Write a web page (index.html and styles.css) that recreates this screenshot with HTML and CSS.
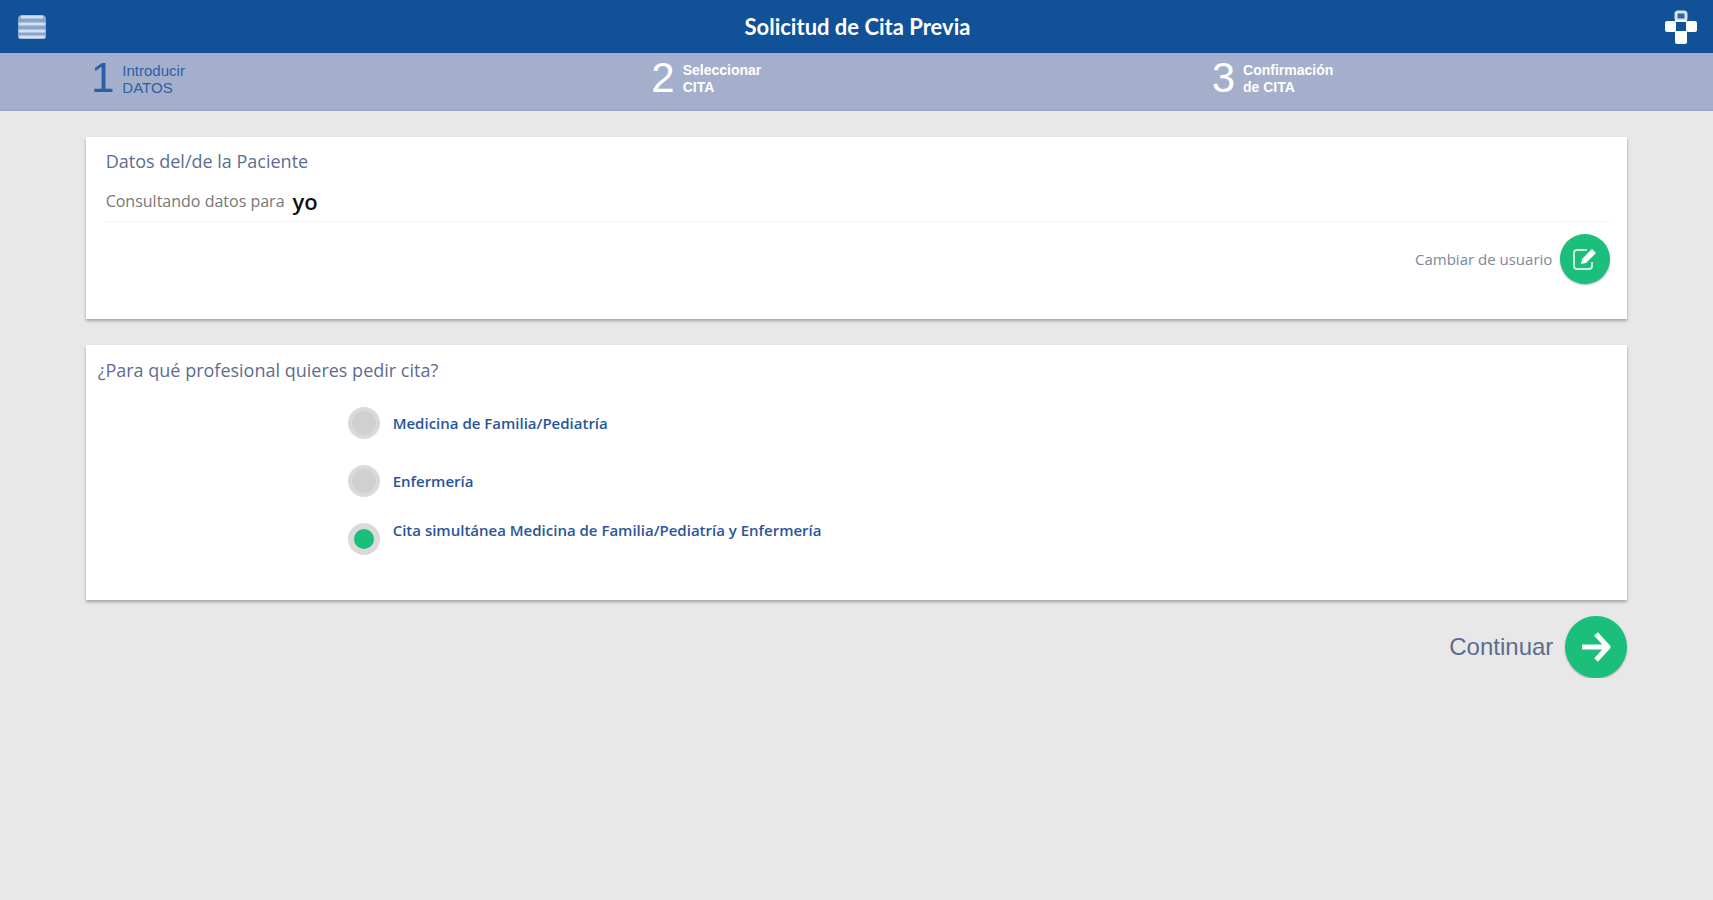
FILE: index.html
```html
<!DOCTYPE html>
<html lang="es">

<head>
    <meta charset="UTF-8" />
    <meta name="viewport" content="width=device-width, initial-scale=1" />
    <title>Solicitud de Cita Previa</title>
    <link rel="stylesheet" href="styles.css">
</head>

<body>
    <header class="cabecera">
        <button type="button" class="btn-menu" aria-label="Menú">
            <svg width="28" height="24" viewBox="0 0 28 24" aria-hidden="true">
                <rect width="28" height="24" rx="4" fill="#86a4ce" />
                <path d="M4 2h20M2 9h24M2 16h24M2 22h24" stroke="#d3dfef" stroke-width="3" stroke-linecap="round" />
            </svg>
        </button>
        <h1>Solicitud de Cita Previa</h1>
        <a href="#" class="logo" aria-label="Inicio">
            <svg width="32" height="34" viewBox="0 0 32 34" aria-hidden="true">
                <rect x="0" y="11" width="11" height="11" rx="2" fill="#fff" />
                <rect x="21" y="11" width="11" height="11" rx="2" fill="#fff" />
                <rect x="10" y="21" width="12" height="13" rx="2" fill="#fff" />
                <rect x="11" y="2" width="10" height="8" rx="2" fill="#2f66a8" stroke="#d5e2f2" stroke-width="3" />
                <path d="M10 11h12M10 22h12" stroke="#fff" stroke-width="2" />
            </svg>
        </a>
    </header>

    <ol class="pasos">
        <li class="paso activo">
            <span class="numero">1</span>
            <span class="texto">Introducir<br>DATOS</span>
        </li>
        <li class="paso">
            <span class="numero">2</span>
            <span class="texto">Seleccionar<br>CITA</span>
        </li>
        <li class="paso">
            <span class="numero">3</span>
            <span class="texto">Confirmación<br>de CITA</span>
        </li>
    </ol>

    <main>
        <section class="tarjeta paciente">
            <h2>Datos del/de la Paciente</h2>
            <p class="consulta">Consultando datos para <strong>yo</strong></p>
            <div class="cambiar">
                <label for="cambiar">Cambiar de usuario</label>
                <button type="button" id="cambiar" class="btn-redondo">
                    <svg width="26" height="24" viewBox="0 0 26 24" fill="none" aria-hidden="true">
                        <path d="M15 3H5a3 3 0 0 0-3 3v13a3 3 0 0 0 3 3h12a3 3 0 0 0 3-3v-4" stroke="#c9f1de" stroke-width="2" />
                        <path d="M9 17l1-5L20 2l4 4-10 10z" fill="#fff" />
                    </svg>
                </button>
            </div>
        </section>

        <form class="tarjeta" id="cita">
            <fieldset>
                <legend>¿Para qué profesional quieres pedir cita?</legend>
                <div class="opcion">
                    <input type="radio" name="profesional" id="medicina">
                    <label for="medicina">Medicina de Familia/Pediatría</label>
                </div>
                <div class="opcion">
                    <input type="radio" name="profesional" id="enfermeria">
                    <label for="enfermeria">Enfermería</label>
                </div>
                <div class="opcion alta">
                    <input type="radio" name="profesional" id="simultanea" checked>
                    <label for="simultanea">Cita simultánea Medicina de Familia/Pediatría y Enfermería</label>
                </div>
            </fieldset>
        </form>

        <div class="continuar">
            <label for="continuar">Continuar</label>
            <button type="submit" form="cita" id="continuar" class="btn-redondo grande">
                <svg width="32" height="32" viewBox="0 0 32 32" fill="none" aria-hidden="true">
                    <path d="M2 16h26M16 3l12 13-12 13" stroke="#fff" stroke-width="5" stroke-linejoin="round" />
                </svg>
            </button>
        </div>
    </main>
</body>

</html>
```

FILE: styles.css
```css
* {
    box-sizing: border-box;
}

body {
    margin: 0;
    font-family: "Open Sans", "Noto Sans", sans-serif;
    background: #e8e8e8;
    color: #5d6d8e;
}

button {
    padding: 0;
    border: 0;
    background: none;
    cursor: pointer;
}

svg {
    display: block;
}

/* cabecera */
.cabecera {
    display: grid;
    grid-template-columns: 1fr auto 1fr;
    align-items: center;
    height: 53px;
    padding: 0 16px 0 18px;
    background: #115198;
    color: #fff;
}

.btn-menu {
    justify-self: start;
}

.logo {
    justify-self: end;
}

h1 {
    margin: 0;
    font-family: Lato, sans-serif;
    font-size: 22px;
    font-weight: 700;
}

/* pasos */
.pasos {
    display: grid;
    grid-template-columns: repeat(3, 1fr);
    height: 58px;
    margin: 0;
    padding: 0 16px;
    list-style: none;
    background: #a4afcb;
    border-bottom: 2px solid #9ba8c6;
    color: #fff;
    font-family: "Liberation Sans", sans-serif;
}

.paso {
    display: flex;
    align-items: flex-start;
    gap: 8px;
    padding-left: 75px;
}

.numero {
    font-size: 42px;
    line-height: 50px;
}

.texto {
    padding-top: 9px;
    font-size: 14px;
    font-weight: 700;
    line-height: 17px;
}

.activo {
    color: #2c5fa6;
}

.activo .texto {
    font-size: 15px;
    font-weight: 400;
}

/* contenido */
main {
    width: 90%;
    margin: 26px auto 0;
}

.tarjeta {
    margin-bottom: 26px;
    background: #fff;
    box-shadow: 0 2px 3px rgba(0, 0, 0, 0.3);
}

.paciente {
    padding: 11px 17px 35px 20px;
}

h2,
legend {
    margin: 0;
    padding: 0;
    font-size: 18px;
    font-weight: 400;
    line-height: 26px;
}

.consulta {
    display: flex;
    align-items: center;
    gap: 8px;
    height: 48px;
    margin: 0 0 12px;
    padding-top: 6px;
    border-bottom: 1px solid #f4f4f4;
    font-size: 16px;
    color: #777;
}

.consulta strong {
    font-size: 22px;
    font-weight: 600;
    line-height: 26px;
    color: #111;
}

.cambiar,
.continuar {
    display: flex;
    align-items: center;
    justify-content: flex-end;
    gap: 8px;
}

.cambiar {
    font-size: 15px;
    color: #7d87a0;
}

.btn-redondo {
    display: grid;
    place-items: center;
    width: 50px;
    height: 50px;
    border-radius: 50%;
    background: #19bf7a;
    box-shadow: 0 1px 2px rgba(0, 0, 0, 0.3);
}

.grande {
    width: 62px;
    height: 62px;
}

fieldset {
    margin: 0;
    padding: 12px 12px 32px;
    border: 0;
}

legend {
    float: left;
    width: 100%;
    margin-bottom: 11px;
}

.opcion {
    clear: both;
    display: flex;
    align-items: center;
    gap: 13px;
    height: 58px;
    padding-left: 250px;
    font-size: 15px;
    font-weight: 600;
    color: #28569a;
}

.opcion input {
    appearance: none;
    flex: none;
    width: 32px;
    height: 32px;
    margin: 0;
    border: 4px solid #dadada;
    border-radius: 50%;
    background: #d0d0d0;
}

.opcion input:checked {
    border-width: 6px;
    background: #19bf7a;
}

.alta label {
    align-self: flex-start;
    padding-top: 10px;
}

.continuar {
    gap: 12px;
    margin-top: -10px;
    font-family: "Liberation Sans", sans-serif;
    font-size: 24px;
}
```
